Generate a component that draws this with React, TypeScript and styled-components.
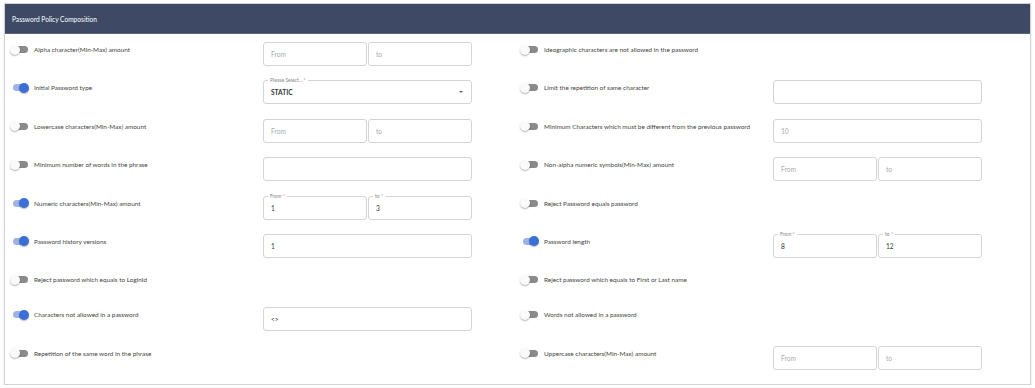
import React from 'react';
import styled, { createGlobalStyle } from 'styled-components';

const GlobalStyle = createGlobalStyle`
  *, *::before, *::after {
    box-sizing: border-box;
  }
  body {
    margin: 0;
    background: #ffffff;
    font-family: Lato, 'Open Sans', sans-serif;
  }
`;

type Field =
  | { kind: 'range'; from?: string; to?: string; labeled?: boolean }
  | { kind: 'text'; value?: string; muted?: boolean }
  | { kind: 'select'; value: string; label: string }
  | null;

type Item = { label: string; on: boolean; field: Field };

const rows: { left: Item; right: Item }[] = [
  {
    left: { label: 'Alpha character(Min-Max) amount', on: false, field: { kind: 'range' } },
    right: { label: 'Ideographic characters are not allowed in the password', on: false, field: null },
  },
  {
    left: { label: 'Initial Password type', on: true, field: { kind: 'select', value: 'STATIC', label: 'Please Select... *' } },
    right: { label: 'Limit the repetition of same character', on: false, field: { kind: 'text' } },
  },
  {
    left: { label: 'Lowercase characters(Min-Max) amount', on: false, field: { kind: 'range' } },
    right: { label: 'Minimum Characters which must be different from the previous password', on: false, field: { kind: 'text', value: '10', muted: true } },
  },
  {
    left: { label: 'Minimum number of words in the phrase', on: false, field: { kind: 'text' } },
    right: { label: 'Non-alpha numeric symbols(Min-Max) amount', on: false, field: { kind: 'range' } },
  },
  {
    left: { label: 'Numeric characters(Min-Max) amount', on: true, field: { kind: 'range', from: '1', to: '3', labeled: true } },
    right: { label: 'Reject Password equals password', on: false, field: null },
  },
  {
    left: { label: 'Password history versions', on: true, field: { kind: 'text', value: '1' } },
    right: { label: 'Password length', on: true, field: { kind: 'range', from: '8', to: '12', labeled: true } },
  },
  {
    left: { label: 'Reject password which equals to LoginId', on: false, field: null },
    right: { label: 'Reject password which equals to First or Last name', on: false, field: null },
  },
  {
    left: { label: 'Characters not allowed in a password', on: true, field: { kind: 'text', value: '<>' } },
    right: { label: 'Words not allowed in a password', on: false, field: null },
  },
  {
    left: { label: 'Repetition of the same word in the phrase', on: false, field: null },
    right: { label: 'Uppercase characters(Min-Max) amount', on: false, field: { kind: 'range' } },
  },
];

const Card = styled.section`
  margin: 3px 4px 0 4px;
  border: 1px solid #d3d3d3;
  box-shadow: 0 1px 2px rgba(0, 0, 0, 0.12);
  background: #fff;
`;

const Header = styled.header`
  height: 30px;
  display: flex;
  align-items: center;
  padding-left: 7px;
  background: #3e4a65;
  color: #ffffff;
  font-size: 6.6px;
  border-bottom: 1px solid #5a6580;
`;

const Body = styled.div`
  display: flex;
  flex-direction: column;
  gap: 14.4px;
  padding: 8px 0 14px 5px;
`;

const Row = styled.div<{ $compact?: boolean }>`
  display: grid;
  grid-template-columns: 1fr 1fr;
  min-height: ${(p) => (p.$compact ? '20.6px' : '24px')};
`;

const Half = styled.div`
  display: grid;
  grid-template-columns: 1fr 209px;
  padding-right: 48px;
`;

const LabelCell = styled.div`
  display: flex;
  align-items: center;
  height: 15px;
  font-size: 6.4px;
  color: #444;
  white-space: nowrap;
`;

const Track = styled.span<{ $on: boolean }>`
  position: relative;
  flex: none;
  width: 19px;
  height: 10px;
  margin-right: 5px;
  &::before {
    content: '';
    position: absolute;
    left: ${(p) => (p.$on ? '3px' : '5px')};
    top: 1.5px;
    width: 13px;
    height: 7px;
    border-radius: 4px;
    background: ${(p) => (p.$on ? '#9db3e4' : '#8a8a8a')};
  }
  &::after {
    content: '';
    position: absolute;
    top: 0;
    left: ${(p) => (p.$on ? '9px' : '0')};
    width: 10px;
    height: 10px;
    border-radius: 50%;
    background: ${(p) => (p.$on ? '#3b6fd6' : '#fafafa')};
    box-shadow: 0 1px 1.5px rgba(0, 0, 0, 0.3);
  }
`;

const FieldCell = styled.div`
  display: flex;
  gap: 1px;
`;

const Box = styled.div<{ $muted?: boolean }>`
  position: relative;
  flex: 1;
  height: 24px;
  display: flex;
  align-items: center;
  padding: 0 8px 0 7px;
  border: 1px solid #d4d4d4;
  border-radius: 3px;
  font-size: 6.6px;
  color: ${(p) => (p.$muted ? '#a9a9a9' : '#333')};
`;

const Placeholder = styled.span`
  color: #ababab;
`;

const Legend = styled.span`
  position: absolute;
  top: -4px;
  left: 4px;
  padding: 0 2px;
  background: #fff;
  font-size: 5px;
  line-height: 6px;
  color: #888;
`;

const Arrow = styled.span`
  margin-left: auto;
  width: 0;
  height: 0;
  border-left: 2.5px solid transparent;
  border-right: 2.5px solid transparent;
  border-top: 2.5px solid #666;
`;

const Value = styled.span<{ $bold?: boolean }>`
  font-weight: ${(p) => (p.$bold ? 700 : 400)};
  color: #333;
`;

const renderField = (field: Field) => {
  if (!field) return <div />;
  if (field.kind === 'range') {
    return (
      <FieldCell>
        <Box>
          {field.labeled && <Legend>From *</Legend>}
          {field.from ? <Value>{field.from}</Value> : <Placeholder>From</Placeholder>}
        </Box>
        <Box>
          {field.labeled && <Legend>to *</Legend>}
          {field.to ? <Value>{field.to}</Value> : <Placeholder>to</Placeholder>}
        </Box>
      </FieldCell>
    );
  }
  if (field.kind === 'select') {
    return (
      <FieldCell>
        <Box>
          <Legend>{field.label}</Legend>
          <Value $bold>{field.value}</Value>
          <Arrow />
        </Box>
      </FieldCell>
    );
  }
  return (
    <FieldCell>
      <Box $muted={field.muted}>{field.value}</Box>
    </FieldCell>
  );
};

const Entry = ({ item }: { item: Item }) => (
  <Half>
    <LabelCell>
      <Track $on={item.on} />
      {item.label}
    </LabelCell>
    {renderField(item.field)}
  </Half>
);

const App = () => (
  <>
    <GlobalStyle />
    <Card>
      <Header>Password Policy Composition</Header>
      <Body>
        {rows.map((r, i) => (
          <Row key={i} $compact={!r.left.field && !r.right.field}>
            <Entry item={r.left} />
            <Entry item={r.right} />
          </Row>
        ))}
      </Body>
    </Card>
  </>
);

export default App;
